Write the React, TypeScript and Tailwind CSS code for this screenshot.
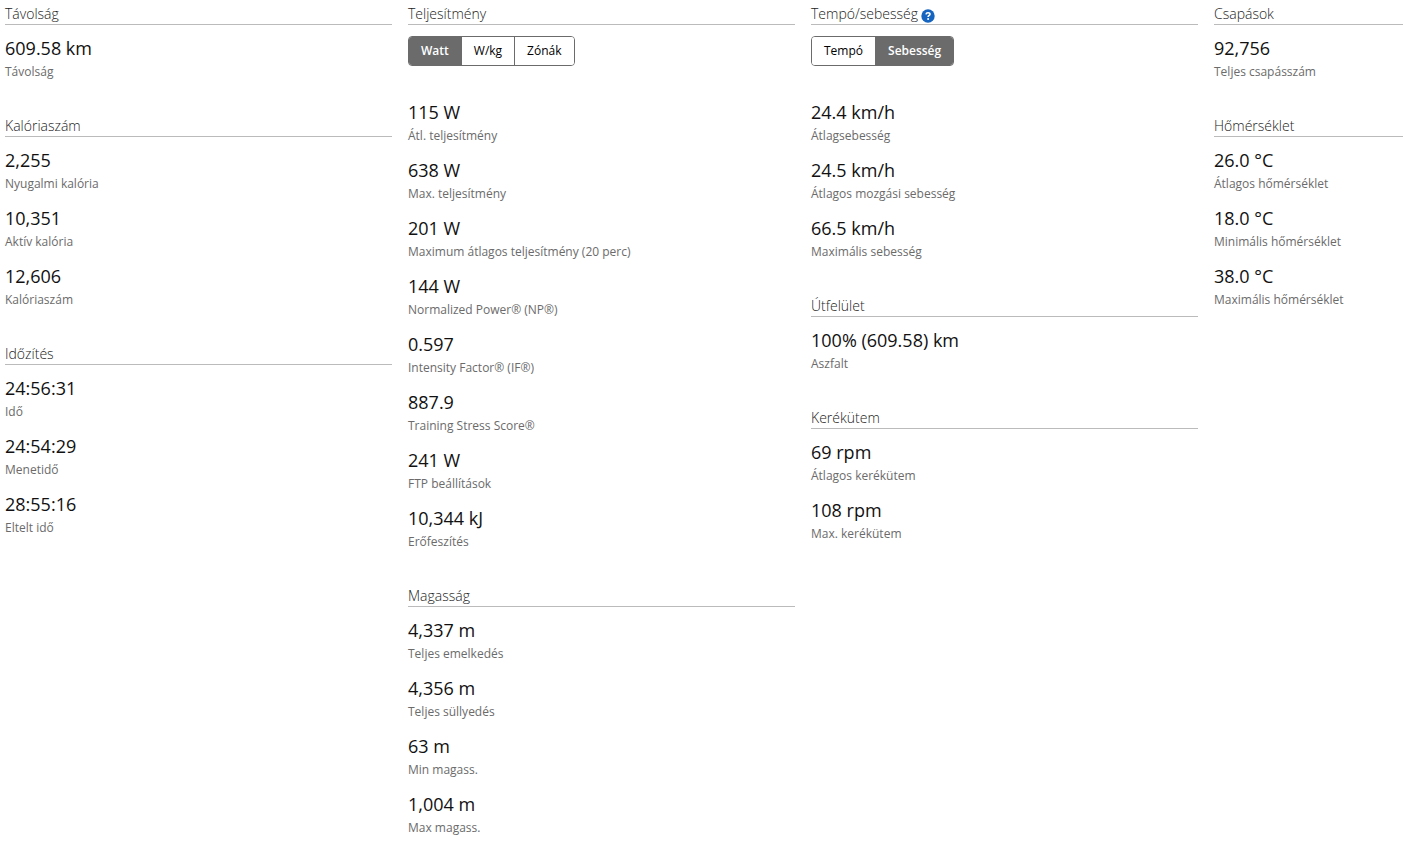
import { useState, type ReactNode } from "react";
import clsx from "clsx";

type Stat = { value: string; label: string };

const calories: Stat[] = [
  { value: "2,255", label: "Nyugalmi kalória" },
  { value: "10,351", label: "Aktív kalória" },
  { value: "12,606", label: "Kalóriaszám" },
];

const timing: Stat[] = [
  { value: "24:56:31", label: "Idő" },
  { value: "24:54:29", label: "Menetidő" },
  { value: "28:55:16", label: "Eltelt idő" },
];

const power: Stat[] = [
  { value: "115 W", label: "Átl. teljesítmény" },
  { value: "638 W", label: "Max. teljesítmény" },
  { value: "201 W", label: "Maximum átlagos teljesítmény (20 perc)" },
  { value: "144 W", label: "Normalized Power® (NP®)" },
  { value: "0.597", label: "Intensity Factor® (IF®)" },
  { value: "887.9", label: "Training Stress Score®" },
  { value: "241 W", label: "FTP beállítások" },
  { value: "10,344 kJ", label: "Erőfeszítés" },
];

const elevation: Stat[] = [
  { value: "4,337 m", label: "Teljes emelkedés" },
  { value: "4,356 m", label: "Teljes süllyedés" },
  { value: "63 m", label: "Min magass." },
  { value: "1,004 m", label: "Max magass." },
];

const speed: Stat[] = [
  { value: "24.4 km/h", label: "Átlagsebesség" },
  { value: "24.5 km/h", label: "Átlagos mozgási sebesség" },
  { value: "66.5 km/h", label: "Maximális sebesség" },
];

const cadence: Stat[] = [
  { value: "69 rpm", label: "Átlagos kerékütem" },
  { value: "108 rpm", label: "Max. kerékütem" },
];

const temperature: Stat[] = [
  { value: "26.0 °C", label: "Átlagos hőmérséklet" },
  { value: "18.0 °C", label: "Minimális hőmérséklet" },
  { value: "38.0 °C", label: "Maximális hőmérséklet" },
];

function HelpButton() {
  return (
    <button type="button" aria-label="Súgó" className="mt-1 cursor-pointer">
      <svg width="14" height="14" viewBox="0 0 14 14" fill="none">
        <circle cx="7" cy="7" r="6.7" fill="#1565c0" />
        <path
          d="M5 5.400C5.200 4.200 6 3.700 7 3.700c1.200 0 2 .6 2 1.500 0 1.300-1.900 1.300-1.900 2.900"
          stroke="#fff"
          strokeWidth="1.600"
        />
        <circle cx="7.100" cy="10" r="1" fill="#fff" />
      </svg>
    </button>
  );
}

/** Segmented control, one option pressed at a time. */
function Toggle({ options, initial }: { options: string[]; initial: string }) {
  const [active, setActive] = useState(initial);

  return (
    <div className="mb-[34px] flex h-[30px] w-fit divide-x divide-[#6b6b6b] overflow-hidden rounded border border-[#6b6b6b]">
      {options.map((option) => (
        <button
          key={option}
          type="button"
          aria-pressed={option === active}
          onClick={() => setActive(option)}
          className={clsx(
            "cursor-pointer px-3 text-xs",
            option === active
              ? "bg-[#6b6b6b] font-semibold text-white"
              : "bg-white font-medium text-black",
          )}
        >
          {option}
        </button>
      ))}
    </div>
  );
}

function Section({
  title,
  stats,
  help,
  children,
}: {
  title: string;
  stats: Stat[];
  help?: boolean;
  children?: ReactNode;
}) {
  return (
    <section>
      <div className="mb-[11px] flex h-[21px] items-center gap-[3px] border-b border-[#bbb]">
        <h2 className="text-sm leading-5 font-light text-[#222]">{title}</h2>
        {help && <HelpButton />}
      </div>
      {children}
      <dl className="flex flex-col gap-2.5">
        {stats.map((stat) => (
          <div key={stat.label} className="flex flex-col-reverse">
            <dt className="text-xs leading-6 text-[#6b6b6b]">{stat.label}</dt>
            <dd className="text-lg leading-6 text-[#111]">{stat.value}</dd>
          </div>
        ))}
      </dl>
    </section>
  );
}

function Column({ children }: { children: ReactNode }) {
  return <div className="flex min-w-0 flex-col gap-8">{children}</div>;
}

export default function App() {
  return (
    <main className="grid grid-cols-[43fr_43fr_43fr_21fr] gap-4 bg-white pt-1 pl-[5px] font-['Open_Sans',sans-serif]">
      <Column>
        <Section title="Távolság" stats={[{ value: "609.58 km", label: "Távolság" }]} />
        <Section title="Kalóriaszám" stats={calories} />
        <Section title="Időzítés" stats={timing} />
      </Column>

      <Column>
        <Section title="Teljesítmény" stats={power}>
          <Toggle options={["Watt", "W/kg", "Zónák"]} initial="Watt" />
        </Section>
        <Section title="Magasság" stats={elevation} />
      </Column>

      <Column>
        <Section title="Tempó/sebesség" stats={speed} help>
          <Toggle options={["Tempó", "Sebesség"]} initial="Sebesség" />
        </Section>
        <Section title="Útfelület" stats={[{ value: "100% (609.58) km", label: "Aszfalt" }]} />
        <Section title="Kerékütem" stats={cadence} />
      </Column>

      <Column>
        <Section title="Csapások" stats={[{ value: "92,756", label: "Teljes csapásszám" }]} />
        <Section title="Hőmérséklet" stats={temperature} />
      </Column>
    </main>
  );
}
